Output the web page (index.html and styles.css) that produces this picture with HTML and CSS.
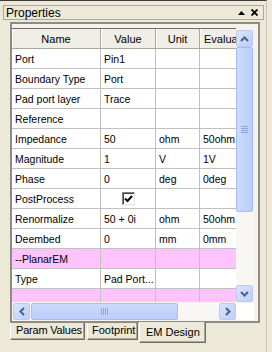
FILE: index.html
```html
<!DOCTYPE html>
<html lang="en">
<head>
    <meta charset="UTF-8">
    <title>Properties</title>
    <link rel="stylesheet" href="styles.css">
</head>
<body>
    <div class="panel">
        <div class="titlebar">
            <span class="title">Properties</span>
            <span class="title-btns">
                <svg width="7" height="4" viewBox="0 0 7 4"><path d="M0 4 L3.5 0 L7 4 Z" fill="#000"/></svg>
                <svg width="7" height="7" viewBox="0 0 7 7"><path d="M0.5 0.5 L6.5 6.5 M6.5 0.5 L0.5 6.5" stroke="#000" stroke-width="1.8"/></svg>
            </span>
        </div>

        <div class="frame">
            <div class="grid-area">
                <div class="grid">
                    <table>
                        <colgroup>
                            <col class="c-name"><col class="c-value"><col class="c-unit"><col class="c-eval">
                        </colgroup>
                        <tr><th>Name</th><th>Value</th><th>Unit</th><th class="left">Evaluated</th></tr>
                        <tr><td>Port</td><td>Pin1</td><td></td><td></td></tr>
                        <tr><td>Boundary Type</td><td>Port</td><td></td><td></td></tr>
                        <tr><td>Pad port layer</td><td>Trace</td><td></td><td></td></tr>
                        <tr><td>Reference</td><td></td><td></td><td></td></tr>
                        <tr><td>Impedance</td><td>50</td><td>ohm</td><td>50ohm</td></tr>
                        <tr><td>Magnitude</td><td>1</td><td>V</td><td>1V</td></tr>
                        <tr><td>Phase</td><td>0</td><td>deg</td><td>0deg</td></tr>
                        <tr><td>PostProcess</td><td class="check-cell"><span class="checkbox"><svg width="9" height="8" viewBox="0 0 9 8"><path d="M1 3.5 L3.5 6 L8 1" stroke="#000" stroke-width="2" fill="none"/></svg></span></td><td></td><td></td></tr>
                        <tr><td>Renormalize</td><td>50 + 0i</td><td>ohm</td><td>50ohm</td></tr>
                        <tr><td>Deembed</td><td>0</td><td>mm</td><td>0mm</td></tr>
                        <tr class="section"><td>--PlanarEM</td><td></td><td></td><td></td></tr>
                        <tr><td>Type</td><td>Pad Port...</td><td></td><td></td></tr>
                        <tr class="section"><td></td><td></td><td></td><td></td></tr>
                    </table>
                </div>
                <div class="vscroll">
                    <div class="sbtn">
                        <svg width="9" height="6" viewBox="0 0 9 6"><path d="M1 5 L4.5 1.5 L8 5" stroke="#4D6185" stroke-width="2" fill="none"/></svg>
                    </div>
                    <div class="vtrack">
                        <div class="vthumb"><span class="grip-h"></span></div>
                    </div>
                    <div class="sbtn">
                        <svg width="9" height="6" viewBox="0 0 9 6"><path d="M1 1 L4.5 4.5 L8 1" stroke="#4D6185" stroke-width="2" fill="none"/></svg>
                    </div>
                </div>
            </div>
            <div class="hscroll-row">
                <div class="hscroll">
                    <div class="sbtn">
                        <svg width="6" height="9" viewBox="0 0 6 9"><path d="M5 1 L1.5 4.5 L5 8" stroke="#4D6185" stroke-width="2" fill="none"/></svg>
                    </div>
                    <div class="htrack">
                        <div class="hthumb"><span class="grip-v"></span></div>
                    </div>
                    <div class="sbtn">
                        <svg width="6" height="9" viewBox="0 0 6 9"><path d="M1 1 L4.5 4.5 L1 8" stroke="#4D6185" stroke-width="2" fill="none"/></svg>
                    </div>
                </div>
                <div class="corner"></div>
            </div>
        </div>

        <div class="tabs">
            <div class="tab tab-param">Param Values</div>
            <div class="tab tab-foot">Footprint</div>
            <div class="tab tab-em active">EM Design</div>
        </div>
    </div>
</body>
</html>
```

FILE: styles.css
```css
body {
    margin: 0;
    width: 272px;
    height: 352px;
    overflow: hidden;
    background: #ECE9D8;
    font-family: "Liberation Sans", Arial, sans-serif;
    font-size: 11px;
    color: #000;
}

.panel {
    width: 267px;
    height: 352px;
    box-sizing: border-box;
    border-top: 1px solid #3C3C3C;
    border-right: 1px solid #C8C5B6;
}

/* barra de titulo */
.titlebar {
    margin: 4px 2px 0 3px;
    height: 13px;
    border: 1px solid #ACA899;
    display: flex;
    align-items: center;
    justify-content: space-between;
    padding: 0 5px 0 2px;
}

.title {
    font-size: 12px;
}

.title-btns {
    display: flex;
    align-items: center;
    gap: 6px;
}

/* marco de la grilla */
.frame {
    margin: 2px 0 0 10px;
    width: 250px;
    height: 301px;
    box-sizing: border-box;
    border: 2px solid #8E8C82;
    background: #F4F3EE;
    padding-top: 4px;
}

.grid-area {
    display: flex;
    height: 274px;
}

.grid {
    width: 224px;
    height: 274px;
    overflow: hidden;
    background: #fff;
    border-top: 1px solid #6E6C63;
    box-sizing: border-box;
}

table {
    border-collapse: separate;
    border-spacing: 0;
    table-layout: fixed;
    width: 260px;
}

.c-name { width: 89px; }
.c-value { width: 55px; }
.c-unit { width: 44px; }
.c-eval { width: 72px; }

th {
    height: 19px;
    padding: 0 4px;
    font-weight: normal;
    font-size: 11px;
    background: #EFEEE7;
    border-right: 1px solid #ACA899;
    border-bottom: 1px solid #ACA899;
    box-shadow: inset 1px 0 #fff;
    white-space: nowrap;
    overflow: hidden;
    text-overflow: clip;
}

th.left {
    text-align: left;
}

td {
    height: 19px;
    padding: 0 2px 0 3px;
    font-size: 10.5px;
    border-right: 1px solid #C0C0C0;
    border-bottom: 1px solid #C0C0C0;
    white-space: nowrap;
    overflow: hidden;
    text-overflow: clip;
}

.section td {
    background: #FFC4FF;
}

.check-cell {
    text-align: center;
}

.checkbox {
    display: inline-flex;
    align-items: center;
    justify-content: center;
    width: 11px;
    height: 11px;
    background: #fff;
    border: 1px solid;
    border-color: #808080 #E0E0E0 #E0E0E0 #808080;
    box-shadow: inset 1px 1px #404040;
    vertical-align: middle;
}

/* scrollbars estilo XP */
.vscroll {
    width: 17px;
    height: 272px;
    margin: 2px 0 0 0;
    display: flex;
    flex-direction: column;
    background: #F8F7F3;
}

.sbtn {
    width: 17px;
    height: 17px;
    box-sizing: border-box;
    border: 1px solid #B8CAF5;
    border-radius: 2px;
    background: linear-gradient(135deg, #D9E4FE, #BCCEF8);
    display: flex;
    align-items: center;
    justify-content: center;
    flex: none;
}

.vtrack {
    flex: 1;
    display: flex;
    flex-direction: column;
}

.vthumb {
    height: 165px;
    box-sizing: border-box;
    border: 1px solid #A8BEF0;
    border-radius: 2px;
    background: linear-gradient(90deg, #CCDAFD, #BBCDF9);
    display: flex;
    align-items: center;
    justify-content: center;
}

.grip-h {
    width: 7px;
    height: 7px;
    background: repeating-linear-gradient(180deg, #8CA6E6 0 1px, transparent 1px 2px);
}

.hscroll-row {
    display: flex;
    height: 17px;
    margin-top: 1px;
}

.hscroll {
    width: 223px;
    padding-left: 1px;
    display: flex;
    background: #F8F7F3;
}

.htrack {
    flex: 1;
    display: flex;
    padding: 0 1px;
}

.hthumb {
    width: 147px;
    box-sizing: border-box;
    border: 1px solid #A8BEF0;
    border-radius: 2px;
    background: linear-gradient(180deg, #CCDAFD, #BBCDF9);
    display: flex;
    align-items: center;
    justify-content: center;
}

.grip-v {
    width: 7px;
    height: 7px;
    background: repeating-linear-gradient(90deg, #8CA6E6 0 1px, transparent 1px 2px);
}

.corner {
    width: 18px;
    background: #fff;
}

/* pestañas */
.tabs {
    display: flex;
    align-items: flex-start;
    margin-left: 10px;
}

.tab {
    height: 17px;
    box-sizing: border-box;
    padding: 0 0 0 5px;
    font-size: 11px;
    line-height: 15px;
    white-space: nowrap;
    background: #ECE9D8;
    border-left: 1px solid #fff;
    border-right: 1px solid #716F64;
    border-bottom: 1px solid #716F64;
    box-shadow: inset -1px -1px #ACA899;
}

.tab-param { width: 75px; letter-spacing: -0.2px; }
.tab-foot { width: 51px; padding-left: 4px; margin-left: 2px; }

.tab.active {
    width: 67px;
    height: 21px;
    line-height: 21px;
    margin-top: -1px;
    margin-left: 1px;
    padding-left: 6px;
}
```
